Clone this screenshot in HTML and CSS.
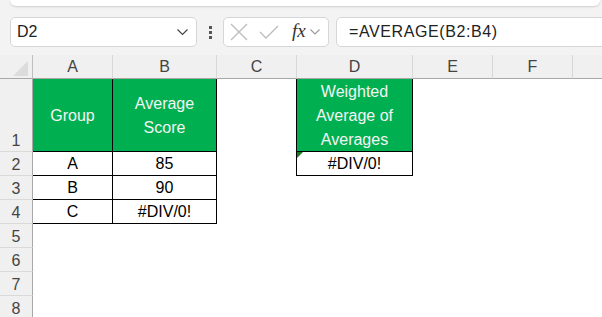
FILE: index.html
```html
<!DOCTYPE html>
<html lang="en">

<head>
  <meta charset="UTF-8">
  <link rel="stylesheet" href="styles.css">
  <title>Weighted Average</title>
</head>

<body>

  <div class="ribbon"></div>

  <div class="formula-bar">
    <div class="name-box">
      <span>D2</span>
      <svg class="chev" width="11" height="7" viewBox="0 0 11 7"><polyline points="0.5,0.5 5.5,5.5 10.5,0.5" fill="none" stroke="#444" stroke-width="1.2"/></svg>
    </div>
    <div class="grip"><i></i><i></i><i></i></div>
    <div class="fx-box">
      <svg width="18" height="18" viewBox="0 0 18 18"><path d="M1 1 L17 17 M17 1 L1 17" stroke="#bcbcbc" stroke-width="1.3"/></svg>
      <svg width="20" height="16" viewBox="0 0 20 16"><polyline points="1,8 7,14 19,2" fill="none" stroke="#bcbcbc" stroke-width="1.3"/></svg>
      <span class="fx">fx</span>
      <svg width="10" height="6" viewBox="0 0 10 6"><polyline points="0.5,0.5 5,5 9.5,0.5" fill="none" stroke="#999" stroke-width="1.1"/></svg>
    </div>
    <div class="formula">=AVERAGE(B2:B4)</div>
  </div>

  <div class="sheet">
    <!-- column headers -->
    <div class="hd corner"><span class="tri"></span></div>
    <div class="hd">A</div>
    <div class="hd">B</div>
    <div class="hd">C</div>
    <div class="hd">D</div>
    <div class="hd">E</div>
    <div class="hd">F</div>
    <div class="hd last"></div>

    <!-- row 1 -->
    <div class="rh">1</div>
    <div class="cell g bd">Group</div>
    <div class="cell g bd">Average<br>Score</div>
    <div class="cell br"></div>
    <div class="cell g bd">Weighted<br>Average of<br>Averages</div>
    <div class="cell"></div>
    <div class="cell"></div>
    <div class="cell"></div>

    <!-- row 2 -->
    <div class="rh">2</div>
    <div class="cell bd">A</div>
    <div class="cell bd">85</div>
    <div class="cell br"></div>
    <div class="cell bd err">#DIV/0!</div>
    <div class="cell"></div>
    <div class="cell"></div>
    <div class="cell"></div>

    <!-- row 3 -->
    <div class="rh">3</div>
    <div class="cell bd">B</div>
    <div class="cell bd">90</div>
    <div class="cell"></div>
    <div class="cell"></div>
    <div class="cell"></div>
    <div class="cell"></div>
    <div class="cell"></div>

    <!-- row 4 -->
    <div class="rh">4</div>
    <div class="cell bd">C</div>
    <div class="cell bd">#DIV/0!</div>
    <div class="cell"></div>
    <div class="cell"></div>
    <div class="cell"></div>
    <div class="cell"></div>
    <div class="cell"></div>

    <div class="rh">5</div>
    <div class="cell empty"></div>
    <div class="rh">6</div>
    <div class="cell empty"></div>
    <div class="rh">7</div>
    <div class="cell empty"></div>
    <div class="rh">8</div>
    <div class="cell empty"></div>
  </div>

</body>

</html>
```

FILE: styles.css
```css
body {
  margin: 0;
  background-color: #f3f3f3;
  font-family: 'Liberation Sans', Arial, sans-serif;
  color: #000;
  overflow: hidden;
}

.ribbon {
  height: 6px;
  margin: 0 2px 0 10px;
  background-color: #fff;
  border-radius: 0 0 8px 8px;
  box-shadow: 0 1px 2px rgba(0, 0, 0, 0.15);
}

.formula-bar {
  display: flex;
  align-items: center;
  height: 30px;
  margin: 11px -12px 8px 10px;
}

.name-box {
  box-sizing: border-box;
  width: 187px;
  height: 30px;
  background-color: #fff;
  border: 1px solid #d6d6d6;
  border-radius: 5px;
  display: flex;
  align-items: center;
  justify-content: space-between;
  padding: 0 8px 0 6px;
  font-size: 16px;
  color: #222;
}

.chev {
  margin-top: 1px;
}

.grip {
  width: 26px;
  display: flex;
  flex-direction: column;
  align-items: center;
  gap: 2px;
}

.grip i {
  width: 3px;
  height: 3px;
  background-color: #555;
}

.fx-box {
  box-sizing: border-box;
  width: 106px;
  height: 30px;
  background-color: #fff;
  border: 1px solid #d6d6d6;
  border-radius: 5px;
  display: flex;
  align-items: center;
  padding: 0 6px 0 6px;
}

.fx-box svg:nth-child(1) {
  margin-right: 11px;
}

.fx-box svg:nth-child(2) {
  margin-right: 13px;
}

.fx {
  font-family: 'Liberation Serif', 'Times New Roman', serif;
  font-style: italic;
  font-size: 19px;
  color: #333;
  margin-right: 4px;
  margin-top: -2px;
}

.formula {
  box-sizing: border-box;
  flex: 1;
  height: 30px;
  margin-left: 7px;
  background-color: #fff;
  border: 1px solid #d6d6d6;
  border-radius: 5px;
  padding-left: 12px;
  display: flex;
  align-items: center;
  font-size: 16px;
  letter-spacing: 0.6px;
  color: #222;
}

.sheet {
  display: grid;
  grid-template-columns: 33px 80px 104px 80px 116px 80px 80px 1fr;
  grid-template-rows: 24px 73px repeat(7, 24px);
  background-color: #fff;
}

.hd {
  box-sizing: border-box;
  background-color: #f0f0f0;
  border-right: 1px solid #d8d8d8;
  border-bottom: 1px solid #a8a8a8;
  display: flex;
  align-items: center;
  justify-content: center;
  font-size: 16px;
  color: #444;
  padding-top: 1px;
}

.hd.last {
  border-right: none;
}

.corner {
  position: relative;
  border-right-color: #bfbfbf;
}

.tri {
  position: absolute;
  right: 4px;
  bottom: 2px;
  width: 0;
  height: 0;
  border-left: 15px solid transparent;
  border-bottom: 15px solid #dcdcdc;
}

.rh {
  box-sizing: border-box;
  background-color: #f0f0f0;
  border-right: 1px solid #a8a8a8;
  border-bottom: 1px solid #dadada;
  display: flex;
  align-items: flex-end;
  justify-content: center;
  font-size: 16px;
  color: #444;
  line-height: 20px;
}

.cell {
  box-sizing: border-box;
  background-color: #fff;
  display: flex;
  align-items: center;
  justify-content: center;
  text-align: center;
  font-size: 16px;
  line-height: 24px;
}

.cell.empty {
  grid-column: 2 / -1;
}

.bd {
  border-right: 1px solid #000;
  border-bottom: 1px solid #000;
}

.br {
  border-right: 1px solid #000;
}

.g {
  background-color: #00b050;
  color: #f4f4f4;
  padding-top: 1px;
}

.err {
  position: relative;
}

.err::before {
  content: "";
  position: absolute;
  left: 0;
  top: 0;
  border-top: 6px solid #1f7a1f;
  border-right: 6px solid transparent;
}
```
